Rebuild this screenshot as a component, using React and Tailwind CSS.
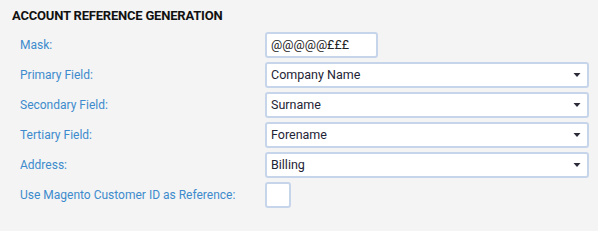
import React from 'react';

const rows = [
    { label: 'Primary Field:', value: 'Company Name' },
    { label: 'Secondary Field:', value: 'Surname' },
    { label: 'Tertiary Field:', value: 'Forename' },
    { label: 'Address:', value: 'Billing' },
];

const Caret = () => (
    <svg width="8" height="5" viewBox="0 0 8 5" className="absolute right-[6px] top-1/2 -translate-y-1/2">
        <path d="M0.5 0.5 L7.5 0.5 L4 4.5 Z" fill="#2b2b3a" />
    </svg>
);

const App = () => {
    return (
        <div className="w-[598px] h-[231px] bg-[#f4f4f4] font-['Roboto',sans-serif] overflow-hidden">
            <h2 className="pl-[12px] pt-[9px] h-[32px] text-[13px] leading-[14px] font-bold text-[#111] tracking-[-0.2px]">
                ACCOUNT REFERENCE GENERATION
            </h2>

            <div className="flex flex-col gap-[4px] pl-[20px]">
                {/* Mask */}
                <div className="flex items-center h-[26px]">
                    <label className="w-[245px] text-[12px] text-[#3d8bcd]">Mask:</label>
                    <div className="w-[113px] h-[26px] bg-white border-2 border-[#c6d5ea] rounded-[3px] flex items-center px-[4px] text-[12.5px] text-[#222]">
                        @@@@@£££
                    </div>
                </div>

                {rows.map((row) => (
                    <div key={row.label} className="flex items-center h-[26px]">
                        <label className="w-[245px] text-[12px] text-[#3d8bcd]">{row.label}</label>
                        <div className="relative w-[324px] h-[26px] bg-white border-2 border-[#c6d5ea] rounded-[3px] flex items-center px-[4px] text-[12.5px] text-[#1e2436]">
                            {row.value}
                            <Caret />
                        </div>
                    </div>
                ))}

                {/* Magento ID checkbox */}
                <div className="flex items-center h-[26px]">
                    <label className="w-[245px] text-[12px] text-[#3d8bcd]">Use Magento Customer ID as Reference:</label>
                    <div className="w-[26px] h-[26px] bg-white border-2 border-[#c6d5ea] rounded-[3px]"></div>
                </div>
            </div>
        </div>
    );
};

export default App;
